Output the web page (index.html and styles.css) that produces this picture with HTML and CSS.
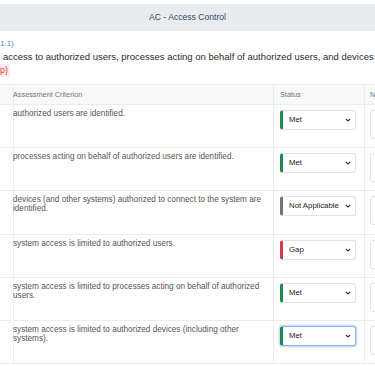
FILE: index.html
```html
<!DOCTYPE html>
<html lang="en">

<head>
    <meta charset="UTF-8">
    <meta name="viewport" content="width=device-width, initial-scale=1.0">
    <title>AC - Access Control</title>
    <link rel="stylesheet" href="styles.css">
</head>

<body>
    <div class="family-header">AC - Access Control</div>

    <div class="requirement">
        <div class="req-ref"><span class="cut">Requirement (3.</span>1.1)</div>
        <div class="req-desc"><span class="cut">Limit system</span>access to authorized users, processes acting on behalf of authorized users, and devices (including other systems).</div>
        <div class="req-tag"><span class="cut"><span class="badge">(1 Ga</span></span><span class="badge">p)</span></div>
    </div>

    <div class="criteria">
        <div class="row head">
            <div class="cell"></div>
            <div class="cell">Assessment Criterion</div>
            <div class="cell">Status</div>
            <div class="cell">Notes</div>
        </div>
        <div class="row">
            <div class="cell"></div>
            <div class="cell text">authorized users are identified.</div>
            <div class="cell"><div class="status met">Met</div></div>
            <div class="cell"><div class="notes"></div></div>
        </div>
        <div class="row">
            <div class="cell"></div>
            <div class="cell text">processes acting on behalf of authorized users are identified.</div>
            <div class="cell"><div class="status met">Met</div></div>
            <div class="cell"><div class="notes"></div></div>
        </div>
        <div class="row">
            <div class="cell"></div>
            <div class="cell text">devices (and other systems) authorized to connect to the system are identified.</div>
            <div class="cell"><div class="status na">Not Applicable</div></div>
            <div class="cell"><div class="notes"></div></div>
        </div>
        <div class="row">
            <div class="cell"></div>
            <div class="cell text">system access is limited to authorized users.</div>
            <div class="cell"><div class="status gap">Gap</div></div>
            <div class="cell"><div class="notes"></div></div>
        </div>
        <div class="row">
            <div class="cell"></div>
            <div class="cell text">system access is limited to processes acting on behalf of authorized users.</div>
            <div class="cell"><div class="status met">Met</div></div>
            <div class="cell"><div class="notes"></div></div>
        </div>
        <div class="row">
            <div class="cell"></div>
            <div class="cell text">system access is limited to authorized devices (including other systems).</div>
            <div class="cell"><div class="status met focused">Met</div></div>
            <div class="cell"><div class="notes"></div></div>
        </div>
    </div>

    <svg width="0" height="0" class="defs">
        <symbol id="chev" viewBox="0 0 6 4">
            <path d="M0.8 0.8 L3 3 L5.2 0.8" fill="none" stroke="#333" stroke-width="1.1" />
        </symbol>
    </svg>
    <script>
        document.querySelectorAll('.status').forEach(el => {
            el.insertAdjacentHTML('beforeend', '<svg class="chev"><use href="#chev"/></svg>');
        });
    </script>
</body>

</html>
```

FILE: styles.css
```css
:root {
    --border-color: #eaecee;
    --head-bg: #e9ecef;
}

body {
    font-family: 'Liberation Sans', Arial, Helvetica, sans-serif;
    margin: 0;
    padding-top: 4px;
    background: white;
    overflow: hidden;
    width: 375px;
    height: 366px;
}

.defs {
    position: absolute;
}

.family-header {
    background: var(--head-bg);
    height: 27px;
    line-height: 27px;
    text-align: center;
    font-size: 8.6px;
    color: #2c4a68;
}

.requirement {
    padding: 6px 0 7px;
    white-space: nowrap;
}

.req-ref,
.req-desc,
.req-tag {
    display: flex;
}

.cut {
    display: flex;
    justify-content: flex-end;
    width: 0;
    overflow: visible;
}

.req-ref {
    font-size: 8px;
    line-height: 12px;
    margin-top: 1px;
    color: #3b8fd0;
}

.req-desc {
    font-size: 9.5px;
    line-height: 14px;
    color: #2b2b2b;
}

.req-desc .cut {
    margin-right: 3px;
}

.req-tag {
    font-size: 8.8px;
    line-height: 13px;
    color: #e0403a;
}

.badge {
    background: #fdeaea;
    padding: 0 2px 0 0;
}

.cut .badge {
    padding: 0;
}

.criteria {
    width: 600px;
    border-top: 1px solid var(--border-color);
}

.row {
    display: grid;
    grid-template-columns: 6px 268px 91px 1fr;
    border-bottom: 1px solid var(--border-color);
    height: 42.2px;
}

.row.head {
    height: 19px;
    background: #f8f9fa;
}

.cell {
    border-right: 1px solid var(--border-color);
    padding: 5px 6px 0 7px;
    font-size: 8.2px;
    line-height: 8.8px;
    color: #555;
}

.head .cell {
    padding-top: 0;
    font-size: 7.3px;
    line-height: 19px;
    color: #6c757d;
}

.head .cell:nth-child(3),
.head .cell:nth-child(4) {
    padding-left: 6px;
}

.row .cell:nth-child(3) {
    padding-left: 6px;
}

.row .cell:nth-child(4) {
    padding-left: 5px;
}

.status {
    position: relative;
    box-sizing: border-box;
    width: 76px;
    height: 20px;
    border: 1px solid #dfe2e5;
    border-left: 3px solid #1e8a4c;
    border-radius: 3px;
    padding-left: 6px;
    font-size: 7.8px;
    line-height: 18px;
    color: #222;
    background: white;
}

.status.na {
    border-left-color: #6c757d;
}

.status.gap {
    border-left-color: #dc3545;
}

.status.focused {
    border-color: #86b7fe;
    border-left-color: #1e8a4c;
    box-shadow: 0 0 0 1.5px rgba(13, 110, 253, 0.22);
}

.chev {
    position: absolute;
    right: 4px;
    top: 7px;
    width: 6px;
    height: 4px;
}

.notes {
    box-sizing: border-box;
    width: 120px;
    height: 29px;
    border: 1px solid #dfe2e5;
    border-radius: 3px;
}
```
